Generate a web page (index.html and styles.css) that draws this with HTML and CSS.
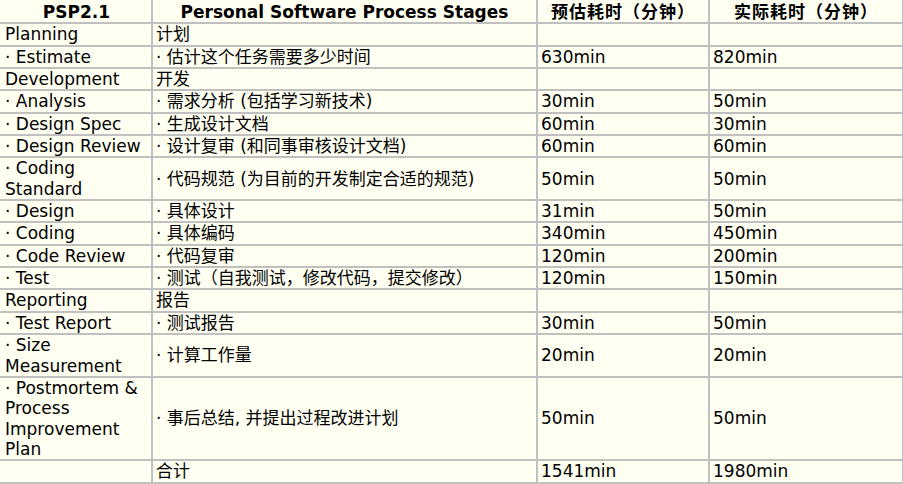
FILE: index.html
```html
<!DOCTYPE html>
<html lang="zh-CN">
<head>
<meta charset="utf-8">
<title>PSP2.1</title>
<link rel="stylesheet" href="styles.css">
</head>
<body>
<table class="psp">
  <colgroup>
    <col class="c1"><col class="c2"><col class="c3"><col class="c4">
  </colgroup>
  <thead>
    <tr><th>PSP2.1</th><th>Personal Software Process Stages</th><th class="cjk">预估耗时（分钟）</th><th class="cjk">实际耗时（分钟）</th></tr>
  </thead>
  <tbody>
    <tr><td>Planning</td><td>计划</td><td></td><td></td></tr>
    <tr><td>· Estimate</td><td>· 估计这个任务需要多少时间</td><td>630min</td><td>820min</td></tr>
    <tr><td>Development</td><td>开发</td><td></td><td></td></tr>
    <tr><td>· Analysis</td><td>· 需求分析 (包括学习新技术)</td><td>30min</td><td>50min</td></tr>
    <tr><td>· Design Spec</td><td>· 生成设计文档</td><td>60min</td><td>30min</td></tr>
    <tr><td>· Design Review</td><td>· 设计复审 (和同事审核设计文档)</td><td>60min</td><td>60min</td></tr>
    <tr><td>· Coding Standard</td><td>· 代码规范 (为目前的开发制定合适的规范)</td><td>50min</td><td>50min</td></tr>
    <tr><td>· Design</td><td>· 具体设计</td><td>31min</td><td>50min</td></tr>
    <tr><td>· Coding</td><td>· 具体编码</td><td>340min</td><td>450min</td></tr>
    <tr><td>· Code Review</td><td>· 代码复审</td><td>120min</td><td>200min</td></tr>
    <tr><td>· Test</td><td>· 测试（自我测试，修改代码，提交修改）</td><td>120min</td><td>150min</td></tr>
    <tr><td>Reporting</td><td>报告</td><td></td><td></td></tr>
    <tr><td>· Test Report</td><td>· 测试报告</td><td>30min</td><td>50min</td></tr>
    <tr><td>· Size Measurement</td><td>· 计算工作量</td><td>20min</td><td>20min</td></tr>
    <tr><td>· Postmortem &amp; Process Improvement Plan</td><td>· 事后总结, 并提出过程改进计划</td><td>50min</td><td>50min</td></tr>
    <tr><td></td><td>合计</td><td>1541min</td><td>1980min</td></tr>
  </tbody>
</table>
</body>
</html>
```

FILE: styles.css
```css
html, body {
  margin: 0;
  padding: 0;
  background: #fffff2;
}

.psp {
  width: 903px;
  table-layout: fixed;
  border-collapse: collapse;
  font-family: "DejaVu Sans", "Noto Sans CJK SC", sans-serif;
  font-size: 17px;
  line-height: 20.35px;
  color: #000;
  background: #fffff2;
}

.c1 { width: 152px; }
.c2 { width: 385px; }
.c3 { width: 172px; }
.c4 { width: 194px; }

.psp th,
.psp td {
  border: 2px solid #c0c0c0;
  padding: 0 3px;
  vertical-align: middle;
  text-align: left;
  overflow: hidden;
}

.psp th {
  font-weight: bold;
  text-align: center;
  border-top: none;
  padding-top: 2px;
}

.psp th.cjk {
  letter-spacing: 1px;
}

.psp th:first-child,
.psp td:first-child {
  border-left: none;
  padding-left: 5px;
}
```
